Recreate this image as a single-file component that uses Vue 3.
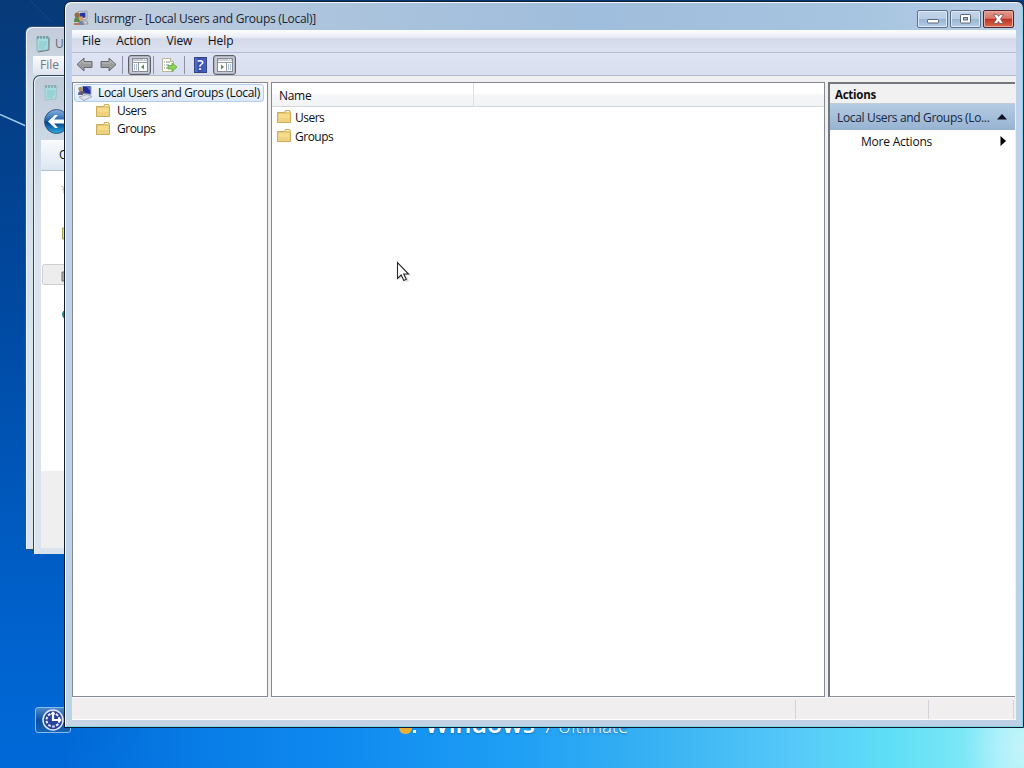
<template>
  <div class="desktop">
    <svg class="light-rays" viewBox="0 0 64 180">
      <path d="M0 114.500 L26 126" stroke="#9ccbee" stroke-width="1.4" />
      <path d="M30 0 L52 22" stroke="#1c5aa0" stroke-width=".7" opacity=".5" />
    </svg>
    <div class="brand">
      <i class="brand-flag"></i><i class="brand-dot"></i>
      <span class="brand-name">Windows</span>
      <span class="brand-seven">7</span>
      <span class="brand-edition">Ultimate</span>
    </div>
    <div class="ease-btn">
      <svg viewBox="0 0 24 24" width="24" height="24">
        <circle cx="12" cy="12" r="10" fill="#2b429d" stroke="#dfe8fa" stroke-width="1.500" />
        <circle cx="12" cy="12" r="6.500" fill="none" stroke="#e6edff" stroke-width="2" stroke-dasharray="2.6 1.5" />
        <path d="M12 5v7h6" fill="none" stroke="#fff" stroke-width="2.200" />
        <path d="M9.500 6.500 12 3l2.500 3.500zM17 9l4 3-4 3z" fill="#fff" />
      </svg>
    </div>

    <!-- background windows -->
    <div class="back-window notepad">
      <div class="back-title">
        <svg viewBox="0 0 16 18" width="16" height="18"><path d="M2 2h12l-1 13-11 1z" fill="#a5dde0" stroke="#8db1b5" /><path d="M3 1v3M6 1v3M9 1v3M12 1v3" stroke="#587d85" /><path d="M4 7h8M4 9h8M4 11h7M4 13h6" stroke="#79b9c0" stroke-width=".6" /><path d="M14 3v12l-11 2" fill="none" stroke="#6e8083" /></svg>
        <span>U</span>
      </div>
      <div class="back-menu">File</div>
    </div>
    <div class="back-window dialog">
      <div class="dialog-title">
        <svg viewBox="0 0 16 18" width="16" height="18"><path d="M2 2h12l-1 13-11 1z" fill="#a5dde0" stroke="#a4c3c8" /><path d="M3 1v3M6 1v3M9 1v3M12 1v3" stroke="#668c94" /><path d="M4 7h8M4 9h8M4 11h7M4 13h6" stroke="#79b9c0" stroke-width=".6" /></svg>
      </div>
      <div class="dialog-nav">
        <svg viewBox="0 0 27 27" width="27" height="27">
          <defs>
            <linearGradient id="orb" x1="0" y1="0" x2="0" y2="1">
              <stop offset="0" stop-color="#8ab4df" /><stop offset=".48" stop-color="#1d5fae" />
              <stop offset=".52" stop-color="#083c87" /><stop offset="1" stop-color="#28b0e5" />
            </linearGradient>
          </defs>
          <circle cx="13.500" cy="13.500" r="12" fill="url(#orb)" stroke="#39577e" />
          <path d="M5 13.500 12 7h3l-4 4.500h10v4H11l4 4.500h-3z" fill="#fff" />
        </svg>
      </div>
      <div class="dialog-bar">O</div>
      <div class="dialog-list">
        <svg viewBox="0 0 24 300" width="24" height="300">
          <path d="M20 15l3 2v6M21 19l3-1" fill="none" stroke="#c9b79d" />
          <path d="M24 57h-2.500v11H24" fill="#e9dd72" stroke="#a9a348" />
          <rect x="1.500" y="93.500" width="30" height="20" rx="2" fill="#ededee" stroke="#cfcfd1" />
          <path d="M24 101h-3v9h3" fill="#aaa" stroke="#757575" />
          <path d="M24 139q-5 4 0 9" fill="#159b9b" stroke="#08777e" />
        </svg>
      </div>
      <div class="dialog-foot"></div>
    </div>

    <!-- management console -->
    <div class="window">
      <div class="titlebar">
        <svg class="app-icon" viewBox="0 0 16 16" width="16" height="16">
          <path d="M5 1.500 14 1v8l-8 1z" fill="#e5e3dc" stroke="#888ba0" stroke-width=".8" />
          <path d="M6.500 3 12.500 2.500v5l-6 1z" fill="#2637a5" />
          <path d="M8 11h6l1 3H8z" fill="#d4d0c6" stroke="#81858e" stroke-width=".7" />
          <circle cx="4" cy="5" r="2.500" fill="#9b693a" /><path d="M1 12q0-5 3-5t3 5z" fill="#608646" />
          <circle cx="8" cy="8.500" r="2.200" fill="#d89d68" /><path d="M5 15q0-4 3-4t3 4z" fill="#6b87a7" />
          <path d="M1 13h5v2H1z" fill="#b87357" />
        </svg>
        <span class="title-text">lusrmgr - [Local Users and Groups (Local)]</span>
        <div class="caption-buttons">
          <button class="caption-btn">
            <svg viewBox="0 0 29 16" width="29" height="16"><rect x="9.500" y="8.500" width="11" height="3.500" rx=".7" fill="#fff" stroke="#596678" /></svg>
          </button>
          <button class="caption-btn">
            <svg viewBox="0 0 29 16" width="29" height="16"><rect x="9.500" y="3.500" width="10" height="8.500" rx=".7" fill="#fff" stroke="#596678" /><rect x="12.500" y="6.500" width="4" height="2.500" fill="#a6bdd9" stroke="#596678" /></svg>
          </button>
          <button class="caption-btn close">
            <svg viewBox="0 0 29 16" width="29" height="16"><path d="M9.500 3.500h3.500l1.500 2 1.500-2h3.500L16.500 8l3 4.500H16l-1.500-2-1.500 2H9.500l3-4.500z" fill="#fff" stroke="#744148" stroke-width=".7" /></svg>
          </button>
        </div>
      </div>

      <div class="menubar">
        <span v-for="item in menus" :key="item" class="menu-item">{{ item }}</span>
      </div>

      <div class="toolbar">
        <svg class="arrow" viewBox="0 0 17 15" width="17" height="15"><path d="M1 7.500 8 1v3.500h8v6H8V14z" fill="#9b9b9d" stroke="#68696c" stroke-linejoin="round" /><path d="M3 7 7 3.500V6h8" fill="none" stroke="#bdbdbf" /></svg>
        <svg class="arrow forward" viewBox="0 0 17 15" width="17" height="15"><path d="M16 7.500 9 1v3.500H1v6h8V14z" fill="#9b9b9d" stroke="#68696c" stroke-linejoin="round" /><path d="M2 6h8V3.500L14 7" fill="none" stroke="#bdbdbf" /></svg>
        <i class="separator first"></i>
        <button class="tool-toggle">
          <svg viewBox="0 0 16 14" width="16" height="14"><rect x=".5" y=".5" width="15" height="13" fill="#fbfbfb" stroke="#858993" /><path d="M1 2h14M1 4.500h14M6.500 5v9" stroke="#979da6" /><path d="M11 1.500h1M13 1.500h1" stroke="#fff" /><path d="M2 7h1M2 9h1M2 11h1M4 7h1M4 9h1M4 11h1" stroke="#637fa4" /><path d="M12 6.500v5L9 9z" fill="#55925a" /></svg>
        </button>
        <i class="separator second"></i>
        <svg class="export" viewBox="0 0 17 16" width="17" height="16"><path d="M1.500 1.500h8l3 3v10h-11z" fill="#fffef5" stroke="#b8b59b" /><path d="M9.500 1.500v3h3" fill="#ebe9d8" stroke="#b8b59b" /><path d="M3 5h1M3 8h1M3 11h1M5 5h4M5 8h3M5 11h3" stroke="#8393aa" /><path d="M7 8.500h4V6l5 4-5 4.500V12H7z" fill="#8ed15b" stroke="#5da638" stroke-width=".8" /></svg>
        <i class="separator third"></i>
        <div class="help-icon">?</div>
        <button class="tool-toggle last">
          <svg viewBox="0 0 16 14" width="16" height="14"><rect x=".5" y=".5" width="15" height="13" fill="#fbfbfb" stroke="#858993" /><path d="M1 2h14M1 4.500h14M9.500 5v9" stroke="#979da6" /><path d="M11 1.500h1M13 1.500h1" stroke="#fff" /><path d="M11 7h1M11 9h1M11 11h1M13 7h1M13 9h1M13 11h1" stroke="#637fa4" /><path d="M4 6.500v5L7 9z" fill="#55925a" /></svg>
        </button>
      </div>

      <div class="panes">
        <div class="tree">
          <div class="tree-root">
            <svg viewBox="0 0 16 16" width="16" height="16">
              <path d="M5 1.500h9v8l-8-1z" fill="#dedfe9" stroke="#8790aa" stroke-width=".8" />
              <path d="M6 1.500h7.500V9L6 8z" fill="#1d2b9d" />
              <path d="M10 2h3v4z" fill="#5967cd" />
              <path d="M2 12l8-2.500 5 2-8 4z" fill="#dfe1e9" stroke="#9099aa" stroke-width=".8" />
              <circle cx="3.500" cy="4" r="2.300" fill="#aa8f61" /><path d="M1 10q0-4 3-4t2 4z" fill="#655e94" /><circle cx="6" cy="7.500" r="1.600" fill="#705951" />
            </svg>
            <span>Local Users and Groups (Local)</span>
          </div>
          <div v-for="name in folders" :key="name" class="tree-item">
            <svg viewBox="0 0 14 14" width="14" height="14"><path d="M.5 12.500v-10h7l1-2h4l1 2v10z" fill="#e5c878" stroke="#cdab5c" /><path d="M1.500 4h11v7.500h-11z" fill="#f6dc8b" /><path d="M1.500 8h11v4h-11z" fill="#efd27f" /><path d="M9 1.500h3" stroke="#fff7ce" /></svg>
            <span>{{ name }}</span>
          </div>
        </div>

        <div class="list">
          <div class="list-header"><div class="column">Name</div></div>
          <div v-for="name in folders" :key="name" class="list-item">
            <svg viewBox="0 0 14 14" width="14" height="14"><path d="M.5 12.500v-10h7l1-2h4l1 2v10z" fill="#e5c878" stroke="#cdab5c" /><path d="M1.500 4h11v7.500h-11z" fill="#f6dc8b" /><path d="M1.500 8h11v4h-11z" fill="#efd27f" /><path d="M9 1.500h3" stroke="#fff7ce" /></svg>
            <span>{{ name }}</span>
          </div>
        </div>

        <div class="actions">
          <div class="actions-title">Actions</div>
          <div class="actions-group">
            <span>Local Users and Groups (Lo...</span>
            <svg viewBox="0 0 10 6" width="10" height="6"><path d="M0 5.500 5 0l5 5.500z" fill="#0b1220" /></svg>
          </div>
          <div class="actions-more">
            <span>More Actions</span>
            <svg viewBox="0 0 6 10" width="6" height="10"><path d="M.5 0 6 5 .5 10z" fill="#000" /></svg>
          </div>
        </div>
      </div>

      <div class="statusbar"><i></i><i></i><i></i></div>
    </div>

    <svg class="cursor" viewBox="0 0 16 22" width="16" height="22">
      <path d="M3 3v16l4-4 3 6 3-1-3-6h5z" fill="#000" opacity=".13" />
      <path d="M1.500 1.500v16l3.700-3.500 2.600 5.500 2.500-1.200L7.700 13h4.800z" fill="#fff" stroke="#27272a" stroke-width="1.100" />
    </svg>
  </div>
</template>

<script setup>
const menus = ['File', 'Action', 'View', 'Help']
const folders = ['Users', 'Groups']
</script>

<style>
body {
  margin: 0;
  overflow: hidden;
}
</style>

<style scoped>
* {
  box-sizing: border-box;
}

svg {
  display: block;
  flex: none;
}

.desktop {
  position: relative;
  width: 1024px;
  height: 768px;
  overflow: hidden;
  font-family: "Open Sans", "Noto Sans", sans-serif;
  font-size: 12px;
  color: #101010;
  white-space: nowrap;
  background:
    radial-gradient(ellipse 60px 90px at 1024px 748px, #c5f4fb, transparent),
    linear-gradient(90deg, #006bd900 0, #006bd900 64px, #087ce6 200px, #0f8bf0 350px, #20a0f5 520px, #37b1f3 650px, #55c8f8 790px, #5edff6 890px, #83e9f8 980px, #9eeffa 1024px) 0 720px / 100% 48px no-repeat,
    linear-gradient(180deg, #073a78 0, #043e85 100px, #0048a0 300px, #0056b8 470px, #0061cc 620px, #006ad8 768px);
}

.light-rays {
  position: absolute;
  left: 0;
  top: 0;
  width: 64px;
  height: 180px;
}

.brand {
  position: absolute;
  left: 390px;
  top: 706px;
  display: flex;
  align-items: baseline;
  color: #fff;
  line-height: 34px;
  text-shadow: 0 1px 2px #1670b4;
}

.brand-flag {
  width: 13px;
  height: 14px;
  margin-left: 9px;
  border-radius: 0 0 6px 6px;
  background: #efae32;
  transform: translateY(1px);
}

.brand-dot {
  width: 3px;
  height: 3px;
  margin: 0 9px 0 1px;
  background: #e8f7ff;
}

.brand-name {
  font-size: 25px;
  font-weight: 600;
  width: 117px;
}

.brand-seven {
  font-size: 22px;
  font-weight: 300;
  width: 16px;
}

.brand-edition {
  font-size: 18px;
  font-weight: 300;
  letter-spacing: 0.25px;
}

.ease-btn {
  position: absolute;
  left: 35px;
  top: 707px;
  width: 36px;
  height: 26px;
  padding: 0 0 0 5px;
  border: 1px solid #86bde9;
  border-radius: 3px;
  background: linear-gradient(#4f8aca, #0c4f9e 50%, #1763b4);
}

.back-window {
  position: absolute;
}

.notepad {
  left: 25px;
  top: 26px;
  width: 60px;
  height: 524px;
  border: 1px solid #35516f;
  border-radius: 7px 0 0 0;
  box-shadow: inset 1px 1px #edf4fb;
  background: linear-gradient(#c2ccda 0, #d2dce7 60px, #d9e4ee 300px, #dde3ed);
}

.back-title {
  display: flex;
  align-items: center;
  height: 29px;
  padding: 4px 0 0 9px;
  gap: 4px;
  color: #5f6872;
}

.back-menu {
  height: 19px;
  margin-left: 7px;
  padding-left: 7px;
  line-height: 18px;
  color: #73777e;
  background: linear-gradient(#fafbfd, #dde3ee);
}

.dialog {
  left: 33px;
  top: 75px;
  width: 50px;
  height: 479px;
  border: 1px solid #33465c;
  border-bottom: 0;
  border-radius: 7px 0 0 0;
  background: linear-gradient(#bfcbd9 0, #cbd7e5 60px, #dbe3ef 150px, #dbe3ef);
  box-shadow: inset 1px 1px #eaf2fa;
}

.dialog-title {
  height: 32px;
  padding: 8px 0 0 9px;
}

.dialog-nav {
  height: 32px;
  padding: 0 0 0 9px;
}

.dialog-bar {
  height: 31px;
  margin-left: 7px;
  padding: 6px 0 0 18px;
  border-bottom: 1px solid #b4c0d0;
  background: linear-gradient(#f9fbfd, #dce6f1);
}

.dialog-list {
  height: 300px;
  margin-left: 7px;
  background: #fff;
}

.dialog-foot {
  height: 77px;
  margin-left: 7px;
  background: #efeff0;
}

.window {
  position: absolute;
  left: 64px;
  top: 1px;
  width: 960px;
  height: 727px;
  display: flex;
  flex-direction: column;
  padding: 0 7px 7px;
  border: 1px solid #101c2b;
  border-radius: 7px 7px 0 0;
  background:
    linear-gradient(90deg, #c5d3e4, #bdd0e6) 0 718px / 100% 8px no-repeat,
    linear-gradient(180deg, #c5d0df00 0, #c5d0df00 28px, #bfd0eb 60px, #c0d1eb 400px, #b8d4e6 680px),
    linear-gradient(90deg, #c5d0df 0, #adc4dd 250px, #9fbddc 520px, #a7c5e0 800px, #b8cde5);
  box-shadow: inset 1px 1px #f4f9fd, inset -1px -1px #7ed6ee;
}

.titlebar {
  display: flex;
  align-items: flex-start;
  flex: none;
  height: 28px;
}

.app-icon {
  margin: 8px 0 0 1px;
}

.title-text {
  padding: 8px 0 0 5px;
  line-height: 18px;
  letter-spacing: -0.27px;
  color: #182431;
}

.caption-buttons {
  display: flex;
  gap: 2px;
  margin: 8px 2px 0 auto;
}

.caption-btn {
  width: 31px;
  height: 18px;
  padding: 0;
  border: 1px solid #5f7188;
  border-radius: 2px;
  box-shadow: inset 0 0 0 1px #dce8f5;
  background: linear-gradient(#c4d5e9 0, #b8cde5 48%, #98b4d2 50%, #b5cee8 100%);
}

.caption-btn.close {
  border-color: #53232b;
  box-shadow: inset 0 0 0 1px #e9aaa0;
  background: linear-gradient(#e39d91 0, #d87565 46%, #bd3023 50%, #d86c4a 100%);
}

.menubar {
  display: flex;
  flex: none;
  height: 23px;
  border-bottom: 1px solid #b6bcd2;
  background: linear-gradient(#fcfdfe 0, #e9edf6 7px, #d5daea 9px, #dce1f1 100%);
}

.menu-item {
  line-height: 22px;
  margin-left: 10px;
  margin-right: 5.6px;
  letter-spacing: -0.1px;
}

.toolbar {
  display: flex;
  align-items: center;
  flex: none;
  height: 23px;
  padding: 1px 0 0 4px;
  border-bottom: 1px solid #b5b9cd;
  background: linear-gradient(#dfe4f4, #d9deef);
}

.arrow.forward {
  margin-left: 7px;
}

.separator {
  width: 1px;
  height: 18px;
  background: #8c92a3;
}

.separator.first {
  margin: 0 5px;
}

.separator.second {
  margin: 0 7px 0 2px;
}

.separator.third {
  margin: 0 9px 0 6px;
}

.tool-toggle {
  display: flex;
  align-items: center;
  justify-content: center;
  flex: none;
  width: 23px;
  height: 20px;
  padding: 0;
  border: 1px solid #5d6069;
  border-radius: 3px;
  box-shadow: inset 0 0 0 1px #b1b4c0;
  background: #c7cad7;
}

.help-icon {
  width: 13px;
  height: 16px;
  border: 1px solid #354584;
  background: linear-gradient(90deg, #6076c8 0, #304ab0 4px, #4b63c6);
  color: #fff;
  font-size: 14px;
  font-weight: 600;
  line-height: 14px;
  text-align: center;
}

.tool-toggle.last {
  margin-left: 6px;
}

.panes {
  display: flex;
  flex: none;
  height: 621px;
  padding-top: 6px;
  background: #f0f0f1;
}

.tree {
  width: 196px;
  margin-right: 3px;
  padding: 1px;
  border: 1px solid #858993;
  background: #fff;
}

.tree-root {
  display: flex;
  align-items: center;
  width: 190px;
  height: 18px;
  padding-left: 2px;
  gap: 5px;
  border: 1px solid #b4cdeb;
  border-radius: 3px;
  background: linear-gradient(#f2f7fe, #dce9fb);
}

.tree-root span {
  line-height: 16px;
  letter-spacing: -0.33px;
}

.tree-item {
  display: flex;
  align-items: center;
  height: 18px;
  padding-left: 22px;
  gap: 7px;
}

.tree-item span {
  line-height: 18px;
  letter-spacing: -0.5px;
}

.tree-item svg {
  margin-bottom: 1px;
}

.list {
  width: 554px;
  margin-right: 3px;
  border: 1px solid #858993;
  background: #fff;
}

.list-header {
  height: 24px;
  margin-bottom: 1px;
  border-bottom: 1px solid #d3d6da;
  background: linear-gradient(#fff 0, #fff 45%, #f6f7f9 50%, #f2f3f5);
}

.column {
  width: 202px;
  height: 23px;
  padding-left: 7px;
  line-height: 25px;
  letter-spacing: -0.3px;
  border-right: 1px solid #dcdfe3;
}

.list-item {
  display: flex;
  align-items: center;
  height: 19px;
  padding-left: 5px;
  gap: 4px;
  letter-spacing: -0.5px;
}

.list-item svg {
  margin-bottom: 2px;
}

.actions {
  width: 187px;
  border-top: 2px solid #73767b;
  border-left: 2px solid #73767b;
  border-bottom: 1px solid #8d8f94;
  background: #fff;
}

.actions-title {
  height: 20px;
  padding-left: 5px;
  line-height: 21px;
  font-weight: 700;
  font-size: 11.5px;
  letter-spacing: -0.25px;
  border-bottom: 1px solid #c3cbd5;
  background: #f1f1f2;
}

.actions-group {
  display: flex;
  align-items: center;
  justify-content: space-between;
  height: 26px;
  padding: 0 8px 0 7px;
  letter-spacing: -0.34px;
  color: #16263c;
  background: linear-gradient(#b5cbe3, #97b3d2);
}

.actions-more {
  display: flex;
  align-items: center;
  justify-content: space-between;
  height: 22px;
  padding: 0 9px 0 31px;
  letter-spacing: -0.22px;
}

.statusbar {
  display: flex;
  flex: none;
  height: 23px;
  padding-top: 2px;
  background: #f0eeee;
  border-top: 1px solid #fafafa;
  border-bottom: 1px solid #fff;
}

.statusbar i {
  width: 724px;
  border-right: 1px solid #d5d2da;
}

.statusbar i + i {
  width: 133px;
}

.statusbar i + i + i {
  width: 85px;
}

.cursor {
  position: absolute;
  left: 396px;
  top: 261px;
}
</style>
